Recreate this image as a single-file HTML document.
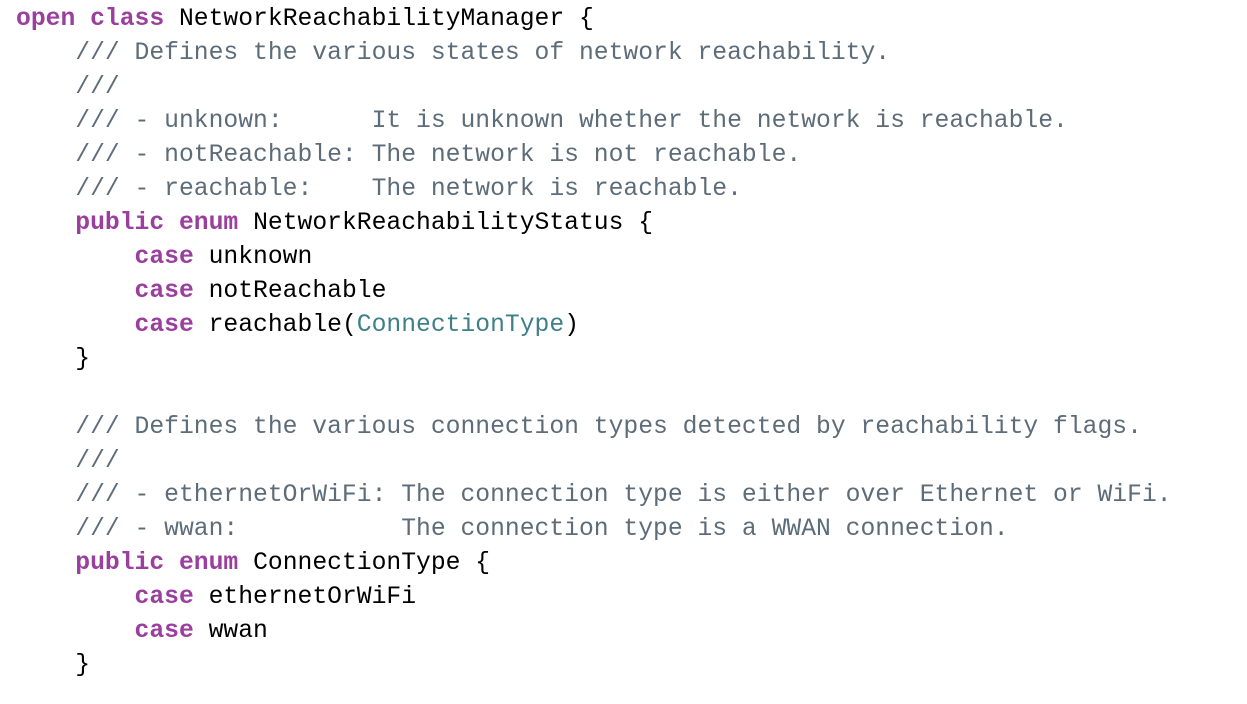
<!DOCTYPE html>
<html><head><meta charset="utf-8"><style>
html,body{margin:0;padding:0;background:#fff;width:1247px;height:704px;overflow:hidden}
pre{margin:0;position:absolute;left:16px;top:2px;font-family:"Liberation Mono",monospace;font-size:24.7px;line-height:34px;color:#000}
.k{color:#9b3f9f;font-weight:bold}
.c{color:#5d6c79}
.t{color:#3e8087}
</style></head><body>
<pre><span class="k">open</span> <span class="k">class</span> NetworkReachabilityManager {
    <span class="c">/// Defines the various states of network reachability.</span>
    <span class="c">///</span>
    <span class="c">/// - unknown:      It is unknown whether the network is reachable.</span>
    <span class="c">/// - notReachable: The network is not reachable.</span>
    <span class="c">/// - reachable:    The network is reachable.</span>
    <span class="k">public</span> <span class="k">enum</span> NetworkReachabilityStatus {
        <span class="k">case</span> unknown
        <span class="k">case</span> notReachable
        <span class="k">case</span> reachable(<span class="t">ConnectionType</span>)
    }

    <span class="c">/// Defines the various connection types detected by reachability flags.</span>
    <span class="c">///</span>
    <span class="c">/// - ethernetOrWiFi: The connection type is either over Ethernet or WiFi.</span>
    <span class="c">/// - wwan:           The connection type is a WWAN connection.</span>
    <span class="k">public</span> <span class="k">enum</span> ConnectionType {
        <span class="k">case</span> ethernetOrWiFi
        <span class="k">case</span> wwan
    }
</pre>
</body></html>
